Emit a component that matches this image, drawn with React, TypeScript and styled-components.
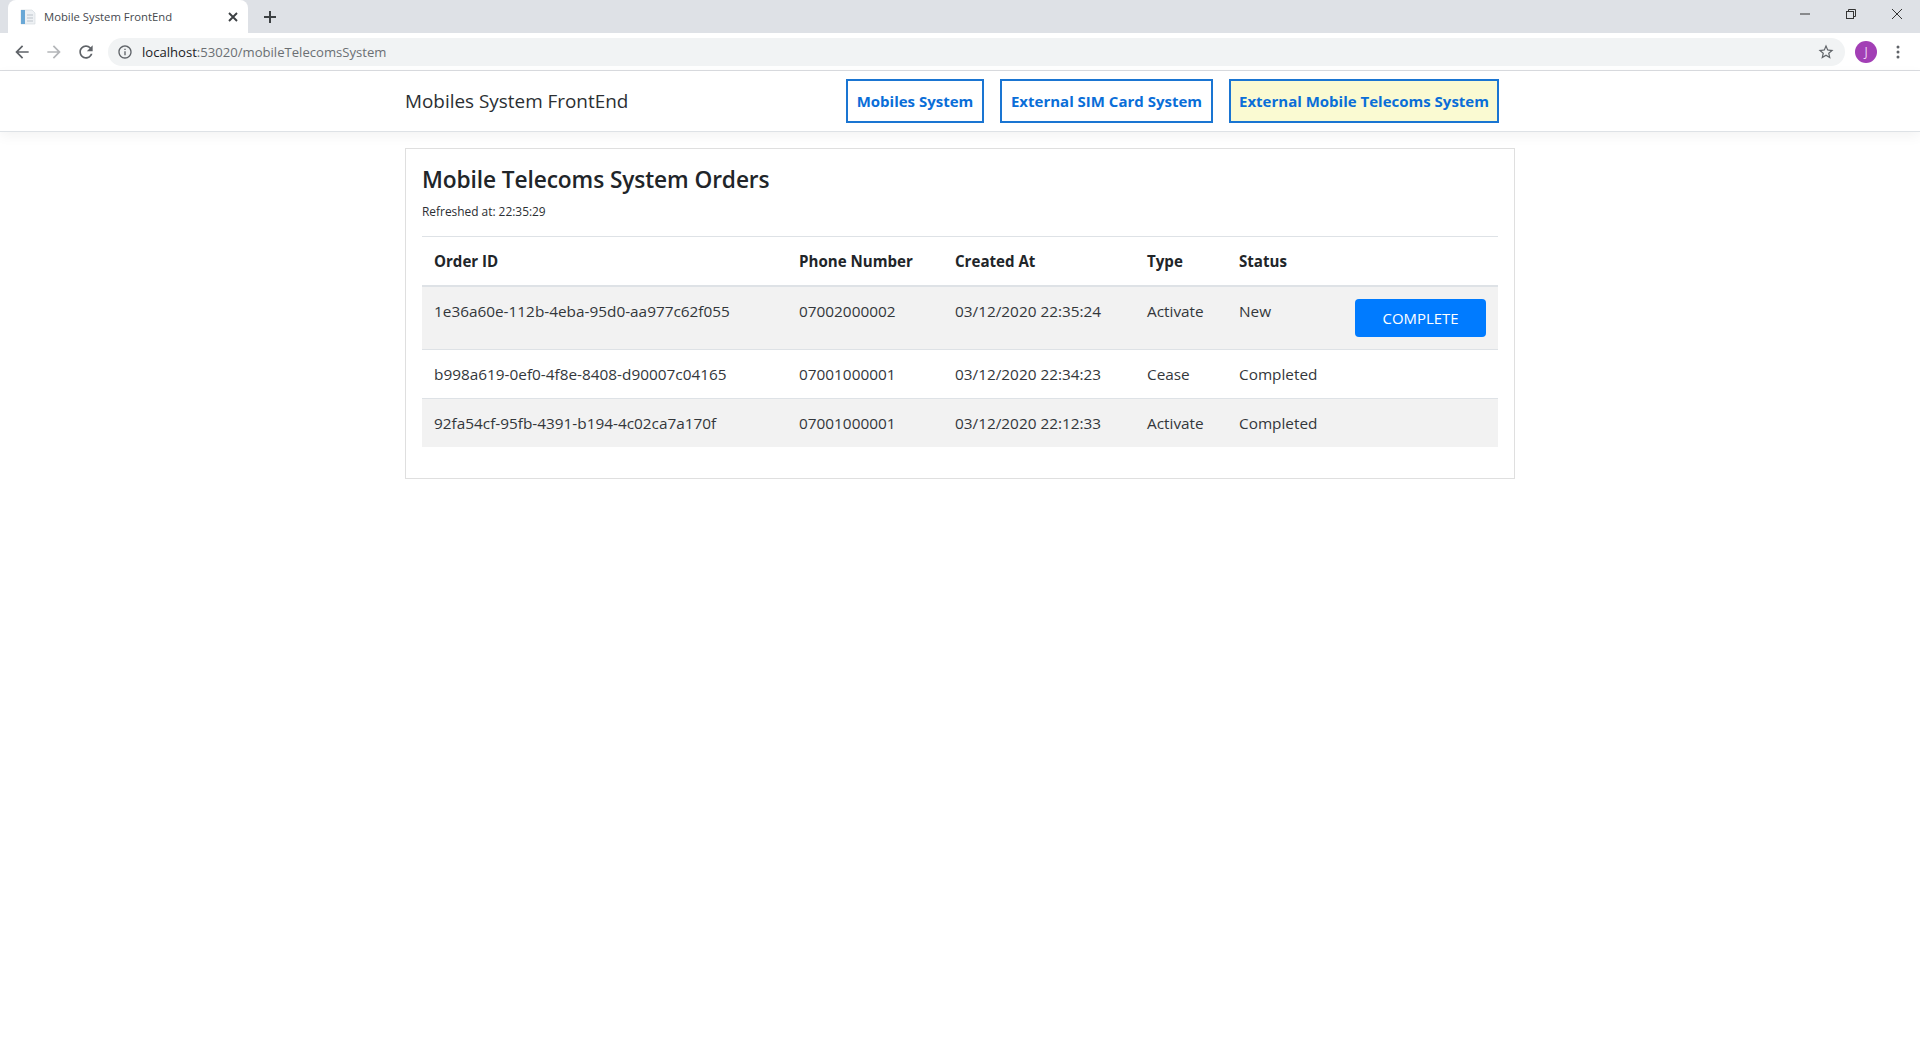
import React from "react";
import styled, { createGlobalStyle } from "styled-components";

const Global = createGlobalStyle`
  html, body { margin: 0; padding: 0; background: #fff; }
  body { font-family: "Open Sans", "Noto Sans", "Liberation Sans", sans-serif; color: #212529; }
`;

const TabStrip = styled.div`
  display: flex; align-items: flex-end; height: 33px; background: #dee1e6; padding-left: 8px;
`;
const Tab = styled.div`
  display: flex; align-items: center; width: 240px; height: 33px; box-sizing: border-box; padding: 0 7px 0 12px;
  background: #fff; border-radius: 8px 8px 0 0; font-size: 11.3px; color: #45494e;
`;
const TabTitle = styled.span`flex: 1; margin-left: 8px; white-space: nowrap;`;
const NewTab = styled.div`display: flex; align-items: center; justify-content: center; width: 28px; height: 33px; margin-left: 8px;`;
const WindowControls = styled.div`display: flex; align-self: flex-start; margin-left: auto; padding-right: 0;`;
const WindowButton = styled.div`display: flex; align-items: center; justify-content: center; width: 46px; height: 28px;`;

const Toolbar = styled.div`
  display: flex; align-items: center; height: 38px; box-sizing: border-box; background: #fff;
  border-bottom: 1px solid #dadce0; padding: 1px 0 1px 6px;
`;
const NavIcon = styled.div`display: flex; align-items: center; justify-content: center; width: 32px; height: 28px;`;
const Omnibox = styled.div`
  display: flex; align-items: center; flex: 1; height: 28px; margin-left: 6px; padding: 0 10px 0 9px;
  border-radius: 14px; background: #f1f3f4; font-size: 13.1px;
`;
const UrlHost = styled.span`color: #202124; margin-left: 9px;`;
const UrlPath = styled.span`color: #6b6f73; flex: 1;`;
const Avatar = styled.div`
  display: flex; align-items: center; justify-content: center; width: 22px; height: 22px; margin-left: 10px;
  border-radius: 50%; background: #a23fb5; color: #f0d6f5; font-size: 12px;
`;
const Dots = styled.div`display: flex; align-items: center; justify-content: center; width: 32px; margin-left: 5px; margin-right: 6px;`;

const NavBar = styled.nav`
  height: 61px; box-sizing: border-box; background: #fff; border-bottom: 1px solid #dee2e6;
  box-shadow: 0 4px 12px rgba(0,0,0,.05); margin-bottom: 16px;
`;
const Container = styled.div`width: 1110px; margin: 0 auto;`;
const NavInner = styled(Container)`
  display: flex; align-items: center; justify-content: space-between; height: 60px; padding-right: 16px; box-sizing: border-box;
`;
const Brand = styled.div`font-size: 18.9px; color: #2b2f33; white-space: nowrap;`;
const NavLinks = styled.div`display: flex; gap: 16px;`;
const NavLink = styled.a<{ $active?: boolean; $w: number }>`
  display: flex; align-items: center; justify-content: center; height: 44px; box-sizing: border-box;
  width: ${p => p.$w}px;
  border: 2px solid #1a75d2; background: ${p => (p.$active ? "#fafad2" : "#fff")};
  color: #0a6ed8; font-size: 15px; font-weight: 700; white-space: nowrap;
`;

const Card = styled.section`
  height: 331px; box-sizing: border-box; border: 1px solid rgba(0,0,0,.125); padding: 16px;
`;
const Title = styled.h4`margin: 0; font-size: 22.7px; font-weight: 550; line-height: 30px; white-space: nowrap; letter-spacing: -0.1px;`;
const Refreshed = styled.div`font-size: 11.9px; line-height: 16px; margin-top: 8px; margin-bottom: 17px; color: #2b2f33;`;
const Table = styled.table`
  width: 1076px; border-collapse: collapse; table-layout: fixed; font-size: 15.35px; line-height: 24px;
`;
const Th = styled.th`
  text-align: left; padding: 12px; font-weight: 700; font-size: 15.1px;
  border-top: 1px solid #dee2e6; border-bottom: 2px solid #dee2e6; white-space: nowrap;
`;
const Row = styled.tr<{ $striped?: boolean }>`background: ${p => (p.$striped ? "#f2f2f2" : "#fff")};`;
const Td = styled.td`padding: 12px; vertical-align: top; border-top: 1px solid #dee2e6; white-space: nowrap; color: #33373b;`;
const CompleteButton = styled.button`
  display: block; width: 131px; height: 38px; border: none; border-radius: 4px; background: #007bff; color: #fff;
  font: inherit; font-size: 14.9px; text-transform: uppercase; padding: 0;
`;

const rows = [
  ["1e36a60e-112b-4eba-95d0-aa977c62f055", "07002000002", "03/12/2020 22:35:24", "Activate", "New", true],
  ["b998a619-0ef0-4f8e-8408-d90007c04165", "07001000001", "03/12/2020 22:34:23", "Cease", "Completed", false],
  ["92fa54cf-95fb-4391-b194-4c02ca7a170f", "07001000001", "03/12/2020 22:12:33", "Activate", "Completed", false],
] as const;

export default function App() {
  return (
    <>
      <Global />
      <TabStrip>
        <Tab>
          <svg width="16" height="16" viewBox="0 0 16 16">
            <path d="M1 1h11l3 3v11H1z" fill="#eef1f4" stroke="#d0d6dc" strokeWidth=".6" />
            <rect x="1" y="1" width="4" height="14" fill="#6aa8d6" />
            <path d="M7 6h6M7 9h6M7 12h6" stroke="#bcc3ca" />
          </svg>
          <TabTitle>Mobile System FrontEnd</TabTitle>
          <svg width="16" height="16" viewBox="0 0 16 16">
            <path d="M4 4l8 8M12 4l-8 8" stroke="#3c4043" strokeWidth="1.9" />
          </svg>
        </Tab>
        <NewTab>
          <svg width="14" height="14" viewBox="0 0 14 14">
            <path d="M7 1v12M1 7h12" stroke="#3c4043" strokeWidth="2" />
          </svg>
        </NewTab>
        <WindowControls>
          <WindowButton>
            <svg width="12" height="12" viewBox="0 0 12 12"><path d="M1 6h10" stroke="#333" strokeWidth="1" /></svg>
          </WindowButton>
          <WindowButton>
            <svg width="12" height="12" viewBox="0 0 12 12" fill="none" stroke="#333">
              <rect x="1.5" y="3.5" width="7" height="7" /><path d="M3.5 3.5v-2h7v7h-2" />
            </svg>
          </WindowButton>
          <WindowButton>
            <svg width="12" height="12" viewBox="0 0 12 12"><path d="M1 1l10 10M11 1L1 11" stroke="#333" /></svg>
          </WindowButton>
        </WindowControls>
      </TabStrip>
      <Toolbar>
        <NavIcon>
          <svg width="20" height="20" viewBox="0 0 24 24" fill="#5f6368"><path d="M20 11H7.83l5.59-5.59L12 4l-8 8 8 8 1.41-1.41L7.83 13H20v-2z" /></svg>
        </NavIcon>
        <NavIcon>
          <svg width="20" height="20" viewBox="0 0 24 24" fill="#b4b6b9"><path d="M4 11h12.17l-5.59-5.59L12 4l8 8-8 8-1.41-1.41L16.17 13H4v-2z" /></svg>
        </NavIcon>
        <NavIcon>
          <svg width="20" height="20" viewBox="0 0 24 24" fill="#5f6368"><path d="M17.65 6.35C16.2 4.9 14.21 4 12 4c-4.42 0-7.99 3.58-7.99 8s3.57 8 7.99 8c3.73 0 6.84-2.55 7.73-6h-2.08c-.82 2.33-3.04 4-5.65 4-3.31 0-6-2.69-6-6s2.69-6 6-6c1.66 0 3.14.69 4.22 1.78L13 11h7V4l-2.35 2.35z" /></svg>
        </NavIcon>
        <Omnibox>
          <svg width="16" height="16" viewBox="0 0 24 24" fill="#5f6368"><path d="M11 7h2v2h-2zm0 4h2v6h-2zm1-9C6.48 2 2 6.48 2 12s4.48 10 10 10 10-4.48 10-10S17.52 2 12 2zm0 18c-4.41 0-8-3.59-8-8s3.59-8 8-8 8 3.59 8 8-3.59 8-8 8z" /></svg>
          <UrlHost>localhost</UrlHost>
          <UrlPath>:53020/mobileTelecomsSystem</UrlPath>
          <svg width="18" height="18" viewBox="0 0 24 24" fill="#5f6368"><path d="M22 9.24l-7.19-.62L12 2 9.19 8.63 2 9.24l5.46 4.73L5.82 21 12 17.27 18.18 21l-1.63-7.03L22 9.24zM12 15.4l-3.76 2.27 1-4.28-3.32-2.88 4.38-.38L12 6.1l1.71 4.04 4.38.38-3.32 2.88 1 4.28L12 15.4z" /></svg>
        </Omnibox>
        <Avatar>J</Avatar>
        <Dots>
          <svg width="4" height="14" viewBox="0 0 4 14" fill="#5f6368"><circle cx="2" cy="2" r="1.5" /><circle cx="2" cy="7" r="1.5" /><circle cx="2" cy="12" r="1.5" /></svg>
        </Dots>
      </Toolbar>
      <NavBar>
        <NavInner>
          <Brand>Mobiles System FrontEnd</Brand>
          <NavLinks>
            <NavLink $w={138}>Mobiles System</NavLink>
            <NavLink $w={213}>External SIM Card System</NavLink>
            <NavLink $w={270} $active>External Mobile Telecoms System</NavLink>
          </NavLinks>
        </NavInner>
      </NavBar>
      <Container>
        <Card>
          <Title>Mobile Telecoms System Orders</Title>
          <Refreshed>Refreshed at: 22:35:29</Refreshed>
          <Table>
            <colgroup>
              <col style={{ width: 365 }} />
              <col style={{ width: 156 }} />
              <col style={{ width: 192 }} />
              <col style={{ width: 92 }} />
              <col style={{ width: 116 }} />
              <col />
            </colgroup>
            <thead>
              <tr>
                <Th>Order ID</Th>
                <Th>Phone Number</Th>
                <Th>Created At</Th>
                <Th>Type</Th>
                <Th>Status</Th>
                <Th />
              </tr>
            </thead>
            <tbody>
              {rows.map((r, i) => (
                <Row key={r[0]} $striped={i % 2 === 0}>
                  <Td>{r[0]}</Td>
                  <Td>{r[1]}</Td>
                  <Td>{r[2]}</Td>
                  <Td>{r[3]}</Td>
                  <Td>{r[4]}</Td>
                  <Td>{r[5] && <CompleteButton>Complete</CompleteButton>}</Td>
                </Row>
              ))}
            </tbody>
          </Table>
        </Card>
      </Container>
    </>
  );
}
